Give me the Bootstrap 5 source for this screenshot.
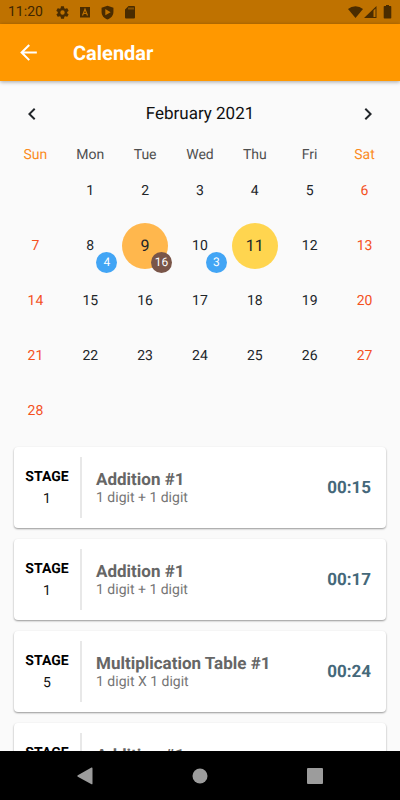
<!DOCTYPE html>
<html lang="en">
<head>
<meta charset="utf-8">
<meta name="viewport" content="width=device-width, initial-scale=1">
<title>Calendar</title>
<link href="https://cdn.jsdelivr.net/npm/bootstrap@5.3.0/dist/css/bootstrap.min.css" rel="stylesheet">
<style>
  body { font-family: Roboto, sans-serif; font-size: 14px; line-height: 16px; color: #111; background: #fafafa; text-rendering: geometricPrecision; }
  button { color: inherit; text-rendering: inherit; }
  svg { display: block; flex: none; }
  .status-strip { height: 24px; background: #bf7200; color: #4a2c00; padding: 0 7px 0 8px; }
  .status-time { width: 47px; line-height: 24px; color: #402600; }
  .app-header { height: 57px; background: #ff9800; padding-left: 16px; box-shadow: 0 1px 4px rgba(0,0,0,.35); z-index: 1; }
  .app-title { font-size: 20px; line-height: 24px; font-weight: 700; margin-left: 32px; }
  .month-bar { height: 66px; padding: 0 20px; }
  .month-name { font-size: 17px; line-height: 20px; font-weight: 400; }
  .calendar { padding: 0 8px; }
  .month-grid { table-layout: fixed; }
  .month-grid th { height: 16px; padding: 0; font-weight: 400; color: #4f4f4f; }
  .month-grid td { height: 55px; padding: 0; }
  .month-grid th.rest { color: #fb8c1f; }
  .month-grid .rest .day { color: #f4511e; }
  .day { width: 46px; height: 46px; font-size: 14px; line-height: 16px; vertical-align: middle; }
  .day-picked { background: #ffb74d; font-size: 16px; }
  .day-today { background: #ffd54f; font-size: 16px; }
  .count { right: -4px; bottom: -4px; width: 21px; height: 21px; font-size: 12px; line-height: 21px; color: #fff; background: #42a5f5; }
  .count-picked { background: #795548; }
  .results { padding: 9px 14px 0; gap: 11px; }
  .result { height: 81px; flex: none; background: #fff; border-radius: 4px; padding: 10px 15px 10px 0; box-shadow: 0 1px 2px rgba(0,0,0,.4); }
  .stage { width: 66px; gap: 6px; }
  .stage-label { font-weight: 700; color: #000; }
  .detail { border-left: 2px solid #e8e8e8; padding-left: 14px; color: #757575; }
  .detail-name { font-size: 17px; line-height: 20px; font-weight: 700; color: #666; margin: 0; }
  .score { font-size: 17px; line-height: 20px; font-weight: 700; color: #45687a; }
  .system-nav { height: 49px; background: #000; color: #9c9c9c; padding: 0 27px; }
</style>
<script src="https://cdn.jsdelivr.net/npm/bootstrap@5.3.0/dist/js/bootstrap.bundle.min.js"></script>
</head>
<body class="d-flex flex-column vh-100 overflow-hidden">
  <div class="status-strip d-flex align-items-center flex-shrink-0">
    <span class="status-time">11:20</span>
    <div class="d-flex align-items-center gap-2">
      <svg width="15" height="15" viewBox="0 0 24 24" fill="currentColor"><path d="M19.4 13a7.500 7.500 0 0 0 0-2l2.100-1.600a.5.5 0 0 0 .1-.7l-2-3.400a.5.5 0 0 0-.6-.2l-2.500 1a7 7 0 0 0-1.700-1L14.400 2.400a.5.5 0 0 0-.5-.4h-4a.5.5 0 0 0-.5.4L9.100 5.100a7 7 0 0 0-1.700 1l-2.500-1a.5.5 0 0 0-.6.200l-2 3.400a.5.5 0 0 0 .1.700L4.500 11a7.500 7.500 0 0 0 0 2l-2.100 1.600a.5.5 0 0 0-.1.700l2 3.400c.1.200.4.300.6.200l2.500-1a7 7 0 0 0 1.700 1l.4 2.700c0 .2.200.4.5.4h4c.2 0 .5-.2.5-.4l.4-2.700a7 7 0 0 0 1.700-1l2.500 1c.2.1.5 0 .6-.2l2-3.400a.5.5 0 0 0-.1-.7zM12 15.500a3.500 3.500 0 1 1 0-7 3.500 3.500 0 0 1 0 7z"/></svg>
      <svg width="14" height="14" viewBox="0 0 14 14"><rect x="2" y="2" width="10" height="10.500" fill="currentColor"/><path d="M4.500 10.500 7 4.200l2.500 6.300M5.500 8.500h3" fill="none" stroke="#bf7200" stroke-width="1.200"/></svg>
      <svg width="15" height="15" viewBox="0 0 24 24" fill="currentColor" fill-rule="evenodd"><path d="M12 1 2.500 4.500V11c0 5.500 4 10.300 9.500 12 5.500-1.700 9.500-6.500 9.500-12V4.500zM8.500 6.500v10l8.500-5z"/></svg>
      <svg width="14" height="14" viewBox="0 0 14 14" fill="currentColor" fill-rule="evenodd"><path d="M5.500 1H11a1 1 0 0 1 1 1v10.500a1 1 0 0 1-1 1H3a1 1 0 0 1-1-1V4.500zM5.500 2.500v2h1v-2zM7.500 2.500v2h1v-2zM9.500 2.500v2h1v-2z"/></svg>
    </div>
    <div class="d-flex align-items-center ms-auto">
      <svg width="15" height="14" viewBox="0 0 15 14" fill="currentColor"><path d="M7.500 13 0 4a12 12 0 0 1 15 0z"/></svg>
      <svg class="ms-0 me-1" width="15" height="14" viewBox="0 0 13 14" fill="currentColor" fill-rule="evenodd"><path d="M12.500 1v12H0zM11.500 3.500 9.500 5.500V12h2z"/></svg>
      <svg width="11" height="14" viewBox="0 0 11 14" fill="currentColor"><path d="M4 0h3v1h1.500a.8.800 0 0 1 .8.800v11a.8.800 0 0 1-.8.800h-6a.8.800 0 0 1-.8-.8v-11a.8.800 0 0 1 .8-.8H4z"/></svg>
    </div>
  </div>

  <header class="app-header d-flex align-items-center flex-shrink-0 text-white position-relative">
    <button type="button" class="btn p-0 border-0 text-white" aria-label="Back">
      <svg width="25" height="25" viewBox="0 0 24 24" fill="currentColor"><path d="M20 11H7.800l5.600-5.600L12 4l-8 8 8 8 1.400-1.400L7.800 13H20z"/></svg>
    </button>
    <h1 class="app-title mb-0">Calendar</h1>
  </header>

  <main class="flex-grow-1 overflow-hidden">
    <section class="calendar-section">
      <div class="month-bar d-flex align-items-center justify-content-between">
        <button type="button" class="btn p-0 border-0" aria-label="Previous month"><svg width="24" height="24" viewBox="0 0 24 24" fill="currentColor"><path d="M15.400 7.400 14 6l-6 6 6 6 1.400-1.400-4.600-4.600z"/></svg></button>
        <h2 class="month-name mb-0">February 2021</h2>
        <button type="button" class="btn p-0 border-0" aria-label="Next month"><svg width="24" height="24" viewBox="0 0 24 24" fill="currentColor"><path d="M10 6 8.600 7.400l4.600 4.600-4.600 4.600L10 18l6-6z"/></svg></button>
      </div>
      <div class="calendar">
        <table class="month-grid w-100 text-center align-middle">
          <thead>
            <tr><th class="rest">Sun</th><th>Mon</th><th>Tue</th><th>Wed</th><th>Thu</th><th>Fri</th><th class="rest">Sat</th></tr>
          </thead>
          <tbody>
            <tr>
              <td></td>
              <td><button type="button" class="btn day rounded-circle border-0 p-0">1</button></td>
              <td><button type="button" class="btn day rounded-circle border-0 p-0">2</button></td>
              <td><button type="button" class="btn day rounded-circle border-0 p-0">3</button></td>
              <td><button type="button" class="btn day rounded-circle border-0 p-0">4</button></td>
              <td><button type="button" class="btn day rounded-circle border-0 p-0">5</button></td>
              <td class="rest"><button type="button" class="btn day rounded-circle border-0 p-0">6</button></td>
            </tr>
            <tr>
              <td class="rest"><button type="button" class="btn day rounded-circle border-0 p-0">7</button></td>
              <td><button type="button" class="btn day rounded-circle border-0 p-0 position-relative">8<span class="count position-absolute rounded-circle">4</span></button></td>
              <td><button type="button" class="btn day day-picked rounded-circle border-0 p-0 position-relative">9<span class="count count-picked position-absolute rounded-circle">16</span></button></td>
              <td><button type="button" class="btn day rounded-circle border-0 p-0 position-relative">10<span class="count position-absolute rounded-circle">3</span></button></td>
              <td><button type="button" class="btn day day-today rounded-circle border-0 p-0">11</button></td>
              <td><button type="button" class="btn day rounded-circle border-0 p-0">12</button></td>
              <td class="rest"><button type="button" class="btn day rounded-circle border-0 p-0">13</button></td>
            </tr>
            <tr>
              <td class="rest"><button type="button" class="btn day rounded-circle border-0 p-0">14</button></td>
              <td><button type="button" class="btn day rounded-circle border-0 p-0">15</button></td>
              <td><button type="button" class="btn day rounded-circle border-0 p-0">16</button></td>
              <td><button type="button" class="btn day rounded-circle border-0 p-0">17</button></td>
              <td><button type="button" class="btn day rounded-circle border-0 p-0">18</button></td>
              <td><button type="button" class="btn day rounded-circle border-0 p-0">19</button></td>
              <td class="rest"><button type="button" class="btn day rounded-circle border-0 p-0">20</button></td>
            </tr>
            <tr>
              <td class="rest"><button type="button" class="btn day rounded-circle border-0 p-0">21</button></td>
              <td><button type="button" class="btn day rounded-circle border-0 p-0">22</button></td>
              <td><button type="button" class="btn day rounded-circle border-0 p-0">23</button></td>
              <td><button type="button" class="btn day rounded-circle border-0 p-0">24</button></td>
              <td><button type="button" class="btn day rounded-circle border-0 p-0">25</button></td>
              <td><button type="button" class="btn day rounded-circle border-0 p-0">26</button></td>
              <td class="rest"><button type="button" class="btn day rounded-circle border-0 p-0">27</button></td>
            </tr>
            <tr>
              <td class="rest"><button type="button" class="btn day rounded-circle border-0 p-0">28</button></td>
              <td></td><td></td><td></td><td></td><td></td><td></td>
            </tr>
          </tbody>
        </table>
      </div>
    </section>

    <section class="results d-flex flex-column">
      <article class="result d-flex">
        <div class="stage d-flex flex-column align-items-center justify-content-center"><span class="stage-label">STAGE</span><span>1</span></div>
        <div class="detail flex-grow-1 d-flex flex-column justify-content-center"><h3 class="detail-name">Addition #1</h3><span>1 digit + 1 digit</span></div>
        <span class="score align-self-center">00:15</span>
      </article>
      <article class="result d-flex">
        <div class="stage d-flex flex-column align-items-center justify-content-center"><span class="stage-label">STAGE</span><span>1</span></div>
        <div class="detail flex-grow-1 d-flex flex-column justify-content-center"><h3 class="detail-name">Addition #1</h3><span>1 digit + 1 digit</span></div>
        <span class="score align-self-center">00:17</span>
      </article>
      <article class="result d-flex">
        <div class="stage d-flex flex-column align-items-center justify-content-center"><span class="stage-label">STAGE</span><span>5</span></div>
        <div class="detail flex-grow-1 d-flex flex-column justify-content-center"><h3 class="detail-name">Multiplication Table #1</h3><span>1 digit X 1 digit</span></div>
        <span class="score align-self-center">00:24</span>
      </article>
      <article class="result d-flex">
        <div class="stage d-flex flex-column align-items-center justify-content-center"><span class="stage-label">STAGE</span><span>&nbsp;</span></div>
        <div class="detail flex-grow-1 d-flex flex-column justify-content-center"><h3 class="detail-name">Addition #1</h3><span>&nbsp;</span></div>
      </article>
    </section>
  </main>

  <nav class="system-nav d-flex align-items-center justify-content-around flex-shrink-0" aria-label="System">
    <button type="button" class="btn p-0 border-0" aria-label="Back"><svg width="16" height="18" viewBox="0 0 16 18" fill="#9c9c9c"><path d="M14.500.600a.8.800 0 0 1 1 .8v15a.8.800 0 0 1-1 .8L.8 9.700a.8.800 0 0 1 0-1.400z"/></svg></button>
    <button type="button" class="btn p-0 border-0" aria-label="Home"><svg width="16" height="16" viewBox="0 0 16 16" fill="#9c9c9c"><circle cx="8" cy="8" r="7.500"/></svg></button>
    <button type="button" class="btn p-0 border-0" aria-label="Recent apps"><svg width="16" height="16" viewBox="0 0 16 16" fill="#9c9c9c"><rect width="16" height="16" rx="1"/></svg></button>
  </nav>
</body>
</html>
